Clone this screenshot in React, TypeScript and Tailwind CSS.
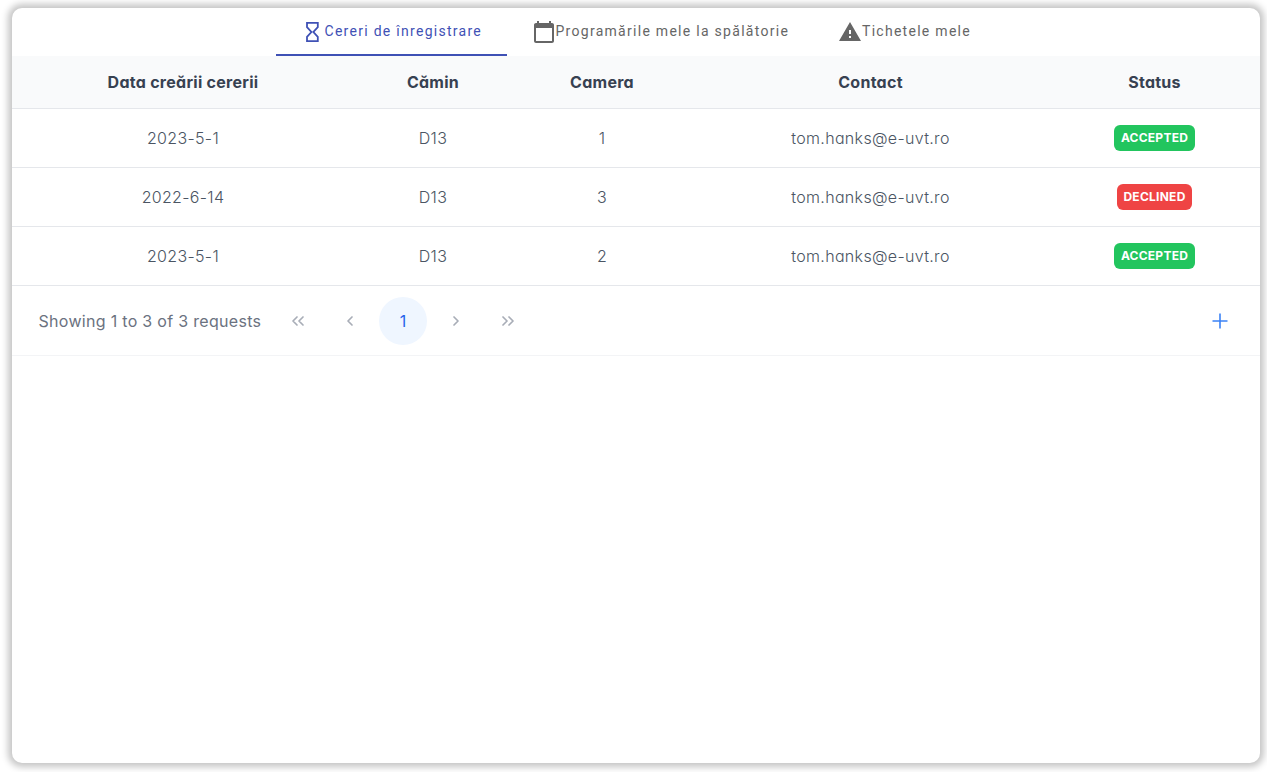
import React from "react";

type Status = "ACCEPTED" | "DECLINED";

interface Request {
  date: string;
  dorm: string;
  room: string;
  contact: string;
  status: Status;
}

const requests: Request[] = [
  { date: "2023-5-1", dorm: "D13", room: "1", contact: "tom.hanks@e-uvt.ro", status: "ACCEPTED" },
  { date: "2022-6-14", dorm: "D13", room: "3", contact: "tom.hanks@e-uvt.ro", status: "DECLINED" },
  { date: "2023-5-1", dorm: "D13", room: "2", contact: "tom.hanks@e-uvt.ro", status: "ACCEPTED" },
];

const columns = "grid grid-cols-[342px_158px_180px_357px_211px] items-center justify-items-center";

function StatusTag({ status }: { status: Status }) {
  const look = status === "ACCEPTED" ? "w-[81px] bg-[#22c55e]" : "w-[75px] bg-[#ef4444]";
  return (
    <span
      className={`flex h-[26px] items-center justify-center rounded-[6px] text-[12px] font-bold tracking-[0.25px] text-white ${look}`}
    >
      {status}
    </span>
  );
}

function PageArrow({ d }: { d: string }) {
  return (
    <button className="flex h-12 w-12 items-center justify-center text-[#a8adb7]">
      <svg width="14" height="14" viewBox="0 0 14 14" fill="none" stroke="currentColor" strokeWidth="1.7">
        <path d={d} strokeLinecap="round" strokeLinejoin="round" />
      </svg>
    </button>
  );
}

export default function App() {
  return (
    <div className="h-[772px] w-[1267px] overflow-hidden bg-white pt-2 pl-3 font-['Inter',sans-serif] [font-feature-settings:'cv11']">
      <main className="h-[755px] w-[1248px] overflow-hidden rounded-[10px] bg-white shadow-[0_0_7px_4px_rgba(0,0,0,0.23)]">
        <nav className="flex h-12 pl-[264px] font-[Roboto,sans-serif] text-[14px] font-[450] tracking-[1.28px] text-[#666666]">
          <button className="flex h-12 w-[231px] items-center border-b-2 border-[#3f51b5] pl-[26px] text-[#3f51b5]">
            <svg width="21" height="24" viewBox="0 0 21 24" fill="none" stroke="currentColor" strokeWidth="1.8" className="shrink-0">
              <path d="M5 3.9h10.8v4.3L11.4 13l4.4 4.8v4.3H5v-4.3L9.4 13 5 8.2z" />
            </svg>
            <span className="pl-[1.5px] whitespace-nowrap">Cereri de înregistrare</span>
          </button>
          <button className="flex h-[46px] w-[307px] items-center pl-[24.5px]">
            <svg width="24" height="24" viewBox="0 0 24 24" fill="currentColor" className="mt-px shrink-0">
              <path d="M20 3h-1V1h-2v2H7V1H5v2H4c-1.1 0-2 .9-2 2v16c0 1.1.9 2 2 2h16c1.1 0 2-.9 2-2V5c0-1.1-.9-2-2-2zm0 18H4V8h16v13z" />
            </svg>
            <span className="whitespace-nowrap">Programările mele la spălătorie</span>
          </button>
          <button className="flex h-[46px] items-center pl-6">
            <svg width="24" height="24" viewBox="0 0 24 24" fill="currentColor" className="mt-px shrink-0">
              <path d="M1 21h22L12 2 1 21zm12-3h-2v-2h2v2zm0-4h-2v-4h2v4z" />
            </svg>
            <span className="whitespace-nowrap">Tichetele mele</span>
          </button>
        </nav>

        <section className="text-[16px] leading-[24px] text-[#4b5563]">
          <header className={`${columns} h-[53px] border-b border-[#e5e7eb] bg-[#f9fafb] font-bold tracking-[0.27px] text-[#374151]`}>
            <span>Data creării cererii</span>
            <span>Cămin</span>
            <span>Camera</span>
            <span>Contact</span>
            <span>Status</span>
          </header>
          {requests.map((r, i) => (
            <div key={i} className={`${columns} h-[59px] border-b border-[#e5e7eb] font-[360] tracking-[0.32px]`}>
              <span>{r.date}</span>
              <span>{r.dorm}</span>
              <span>{r.room}</span>
              <span>{r.contact}</span>
              <StatusTag status={r.status} />
            </div>
          ))}
          <footer className="flex h-[70px] items-center border-b border-[#f3f4f6] pl-[26px] text-[#6b7280]">
            <span className="w-[236px] pl-[0.5px] font-[370] whitespace-nowrap tracking-[0.3px]">Showing 1 to 3 of 3 requests</span>
            <div className="flex items-center gap-1">
              <PageArrow d="M6 3 L2 7 L6 11 M12 3 L8 7 L12 11" />
              <PageArrow d="M9 3 L5 7 L9 11" />
              <button className="mx-px flex h-12 w-12 items-center justify-center rounded-full bg-[#eff6ff] text-[#2563eb]">1</button>
              <PageArrow d="M5 3 L9 7 L5 11" />
              <PageArrow d="M2 3 L6 7 L2 11 M8 3 L12 7 L8 11" />
            </div>
            <button className="mr-8 ml-auto text-[#3b82f6]">
              <svg width="16" height="16" viewBox="0 0 16 16" fill="none" stroke="currentColor" strokeWidth="1.6">
                <path d="M8 .5v15M.5 8h15" />
              </svg>
            </button>
          </footer>
        </section>
      </main>
    </div>
  );
}
